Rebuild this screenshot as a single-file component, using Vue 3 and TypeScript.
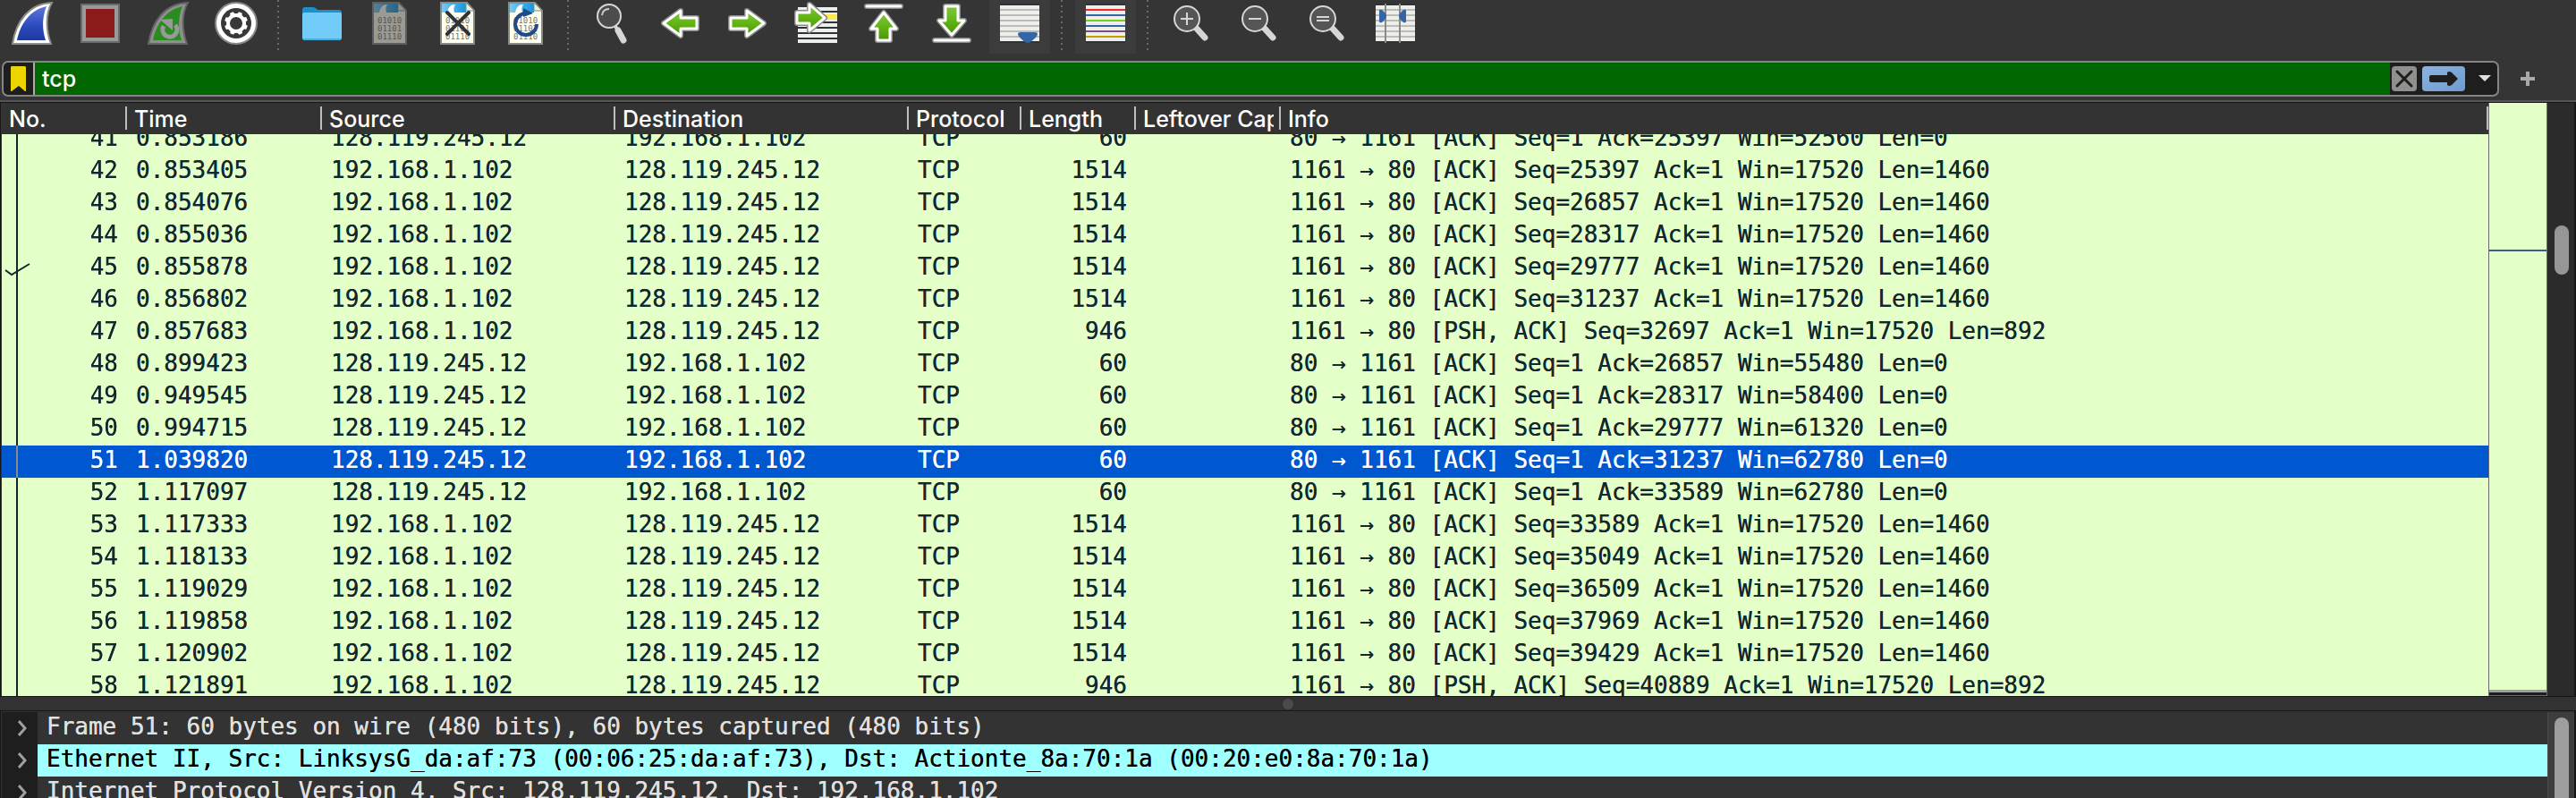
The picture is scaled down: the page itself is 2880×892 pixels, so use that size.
<script setup lang="ts">
import { onMounted, ref } from 'vue'

interface Packet {
  no: number
  time: string
  out: boolean
  length: number
  info: string
}

const local = '192.168.1.102'
const server = '128.119.245.12'

function sent(no: number, time: string, seq: number, push = false): Packet {
  const len = push ? 892 : 1460
  return {
    no,
    time,
    out: true,
    length: push ? 946 : 1514,
    info: `1161 → 80 [${push ? 'PSH, ' : ''}ACK] Seq=${seq} Ack=1 Win=17520 Len=${len}`,
  }
}

function acked(no: number, time: string, ack: number, win: number): Packet {
  return { no, time, out: false, length: 60, info: `80 → 1161 [ACK] Seq=1 Ack=${ack} Win=${win} Len=0` }
}

const packets: Packet[] = [
  acked(41, '0.853186', 25397, 52560),
  sent(42, '0.853405', 25397),
  sent(43, '0.854076', 26857),
  sent(44, '0.855036', 28317),
  sent(45, '0.855878', 29777),
  sent(46, '0.856802', 31237),
  sent(47, '0.857683', 32697, true),
  acked(48, '0.899423', 26857, 55480),
  acked(49, '0.949545', 28317, 58400),
  acked(50, '0.994715', 29777, 61320),
  acked(51, '1.039820', 31237, 62780),
  acked(52, '1.117097', 33589, 62780),
  sent(53, '1.117333', 33589),
  sent(54, '1.118133', 35049),
  sent(55, '1.119029', 36509),
  sent(56, '1.119858', 37969),
  sent(57, '1.120902', 39429),
  sent(58, '1.121891', 40889, true),
]

const selected = ref(51)
const ackedPacket = 45
const filter = ref('tcp')
const details = [
  'Frame 51: 60 bytes on wire (480 bits), 60 bytes captured (480 bits)',
  'Ethernet II, Src: LinksysG_da:af:73 (00:06:25:da:af:73), Dst: Actionte_8a:70:1a (00:20:e0:8a:70:1a)',
  'Internet Protocol Version 4, Src: 128.119.245.12, Dst: 192.168.1.102',
]
const activeDetail = ref(1)
const stripes = [8, 14, 20, 26, 32, 38]
const ruleColors = ['#ef2929', '#3465a4', '#73d216', '#3465a4', '#75507b', '#c4a000']
const teeth = [0, 45, 90, 135, 180, 225, 270, 315]

const list = ref<HTMLElement | null>(null)
onMounted(() => {
  if (list.value) list.value.scrollTop = 12
})
</script>

<template>
  <div class="window">
    <svg class="defs" width="0" height="0" aria-hidden="true">
      <defs>
        <linearGradient id="blue" x1="0" y1="0" x2="0" y2="1"><stop offset="0" stop-color="#5b7ad9" /><stop offset=".6" stop-color="#2b49bb" /><stop offset="1" stop-color="#1f3a9e" /></linearGradient>
        <linearGradient id="green" x1="0" y1="0" x2="0" y2="1"><stop offset="0" stop-color="#7fc93a" /><stop offset=".5" stop-color="#62b515" /><stop offset="1" stop-color="#4a9408" /></linearGradient>
        <linearGradient id="sky" x1="0" y1="0" x2="1" y2="0"><stop offset="0" stop-color="#7cc8ef" /><stop offset="1" stop-color="#1296dc" /></linearGradient>
        <g id="doc">
          <path d="M5 3h29l8 9v37H5z" fill="#fffff0" stroke="#888a85" stroke-width="2" />
          <path d="M6 4h27v10H6z" fill="url(#sky)" />
          <path d="M12 14c1-6 4-9 9-9-2 3-2 6-1 9z" fill="#fff" />
          <path d="M33 3v9h9z" fill="#e8eee0" stroke="#888a85" />
          <g class="bits"><text x="10" y="26">01010</text><text x="10" y="35">01101</text><text x="10" y="44">01110</text></g>
        </g>
        <g id="lens">
          <path d="M30 32l9 10" stroke="#d6d6d6" stroke-width="7" stroke-linecap="round" />
          <circle cx="19" cy="21" r="14" fill="#555" stroke="#d6d6d6" stroke-width="2" />
        </g>
        <path id="arrow" d="M5 20h18V12l19 14-19 14v-8H5z" />
      </defs>
    </svg>

    <div class="toolbar" role="toolbar" aria-label="Main toolbar">
      <button aria-label="Start capture"><svg viewBox="0 0 48 52"><path d="M2 49C6 24 20 4 46 3c-7 12-7 30-1 46z" fill="#fff" stroke="#8c8c88" stroke-width="2" /><path d="M7 45C11 26 22 11 40 7c-5 12-5 26-1 38z" fill="url(#blue)" /></svg></button>
      <button aria-label="Stop capture"><svg viewBox="0 0 48 52"><path d="M3 5h42v42H3z" fill="#999" stroke="#6b6b6b" stroke-width="2" /><path d="M8 10h32v32H8z" fill="#8b1a1a" /></svg></button>
      <button aria-label="Restart capture"><svg viewBox="0 0 48 52"><path d="M2 49C6 24 20 4 46 3c-7 12-7 30-1 46z" fill="#8f8f8f" stroke="#646464" stroke-width="2" /><path d="M7 45C11 26 22 11 40 7c-5 12-5 26-1 38z" fill="#2a8c1e" /><path d="M19 29a8 8 0 1 0 13-1" fill="none" stroke="#999" stroke-width="5" /><path d="M15 22l14-1v13z" fill="#999" /></svg></button>
      <button aria-label="Capture options"><svg viewBox="0 0 48 52"><circle cx="24" cy="26" r="23" fill="#fff" stroke="#888" stroke-width="2" /><circle cx="24" cy="26" r="17" fill="#383838" /><circle cx="24" cy="26" r="9" fill="none" stroke="#fff" stroke-width="4" /><path v-for="a in teeth" :key="a" d="M22 13h4l1 4h-6z" fill="#fff" :transform="`rotate(${a + 22} 24 26)`" /></svg></button>
      <i class="divider" />
      <button aria-label="Open file"><svg viewBox="0 0 48 52"><path d="M2 11q0-3 3-3h9q2 0 4 2l2 1h23q3 0 3 3v26H2z" fill="#1e8fc8" /><path d="M2 16q0-2 2-2h40q2 0 2 2v26q0 3-3 3H5q-3 0-3-3z" fill="#73cbfa" /><path d="M3 43q1 2 3 2h36q2 0 3-2z" fill="#48aede" /></svg></button>
      <button aria-label="Save file"><svg viewBox="0 0 48 52"><g opacity=".5"><use href="#doc" /></g></svg></button>
      <button aria-label="Close file"><svg viewBox="0 0 48 52"><use href="#doc" /><path d="M12 14l24 24M36 14L12 38" stroke="#2e3436" stroke-width="4" stroke-linecap="round" /></svg></button>
      <button aria-label="Reload file"><svg viewBox="0 0 48 52"><use href="#doc" /><path d="M24 15a12 12 0 1 0 12 12" fill="none" stroke="#204a87" stroke-width="4" /><path d="M21 9l11 6-11 4z" fill="#204a87" /></svg></button>
      <i class="divider" />
      <button aria-label="Find packet"><svg viewBox="0 0 48 52"><path d="M31 34l6 11" stroke="#d6d6d6" stroke-width="7" stroke-linecap="round" /><path d="M27 28l4 6" stroke="#d6d6d6" stroke-width="4" /><circle cx="21" cy="18" r="13" fill="#4c4c4c" stroke="#d6d6d6" stroke-width="2" /><path d="M13 17q1-7 8-7" fill="none" stroke="#ccc" stroke-width="2" /></svg></button>
      <button aria-label="Previous packet"><svg viewBox="0 0 48 52"><g transform="matrix(-1 0 0 1 48 0)"><use href="#arrow" class="rim" /><use href="#arrow" class="fill" /></g></svg></button>
      <button aria-label="Next packet"><svg viewBox="0 0 48 52"><use href="#arrow" class="rim" /><use href="#arrow" class="fill" /></svg></button>
      <button aria-label="Go to packet"><svg viewBox="0 0 48 52"><path d="M4 6h44v42H4z" fill="#2e3436" /><path v-for="y in [10, 16, 22, 28, 34, 40, 46]" :key="y" :d="`M4 ${y}h44`" stroke="#eeeeec" stroke-width="4" /><path d="M34 16h14v6H34z" fill="#fce94f" /><path d="M3 14h14V5l17 15-17 14v-8H3z" class="rim" /><path d="M3 14h14V5l17 15-17 14v-8H3z" class="fill" /></svg></button>
      <button aria-label="First packet"><svg viewBox="0 0 48 52"><path d="M5 7h38" class="bar-rim" /><path d="M5 7h38" class="bar" /><path d="M24 14l14 18h-7v13H17V32h-7z" class="rim" /><path d="M24 14l14 18h-7v13H17V32h-7z" class="fill" /></svg></button>
      <button aria-label="Last packet"><svg viewBox="0 0 48 52"><path d="M5 45h38" class="bar-rim" /><path d="M5 45h38" class="bar" /><path d="M24 39L10 23h7V7h14v16h7z" class="rim" /><path d="M24 39L10 23h7V7h14v16h7z" class="fill" /></svg></button>
      <button class="on" aria-pressed="true" aria-label="Auto scroll"><svg viewBox="0 0 48 52"><path d="M2 4h44v44H2z" fill="#2e3436" /><path d="M2 6h44v40H2z" fill="#eeeeec" /><path v-for="y in stripes" :key="y" :d="`M2 ${y + 3}h44`" stroke="#babdb6" stroke-width="2" /><path d="M22 38q0-2 3-2h16q3 0 3 2 0 3-8 9-3 2-6 0-8-6-8-9z" fill="#3465a4" /></svg></button>
      <i class="divider" />
      <button class="on" aria-pressed="true" aria-label="Colorize packets"><svg viewBox="0 0 48 52"><path d="M2 4h44v44H2z" fill="#2e3436" /><path d="M2 6h44v40H2z" fill="#eeeeec" /><path v-for="(c, i) in ruleColors" :key="i" :d="`M2 ${11 + i * 6}h44`" :stroke="c" stroke-width="2" /></svg></button>
      <i class="divider" />
      <button aria-label="Zoom in"><svg viewBox="0 0 48 52"><use href="#lens" /><path d="M12 21h14M19 14v14" class="sign" /></svg></button>
      <button aria-label="Zoom out"><svg viewBox="0 0 48 52"><use href="#lens" /><path d="M12 21h14" class="sign" /></svg></button>
      <button aria-label="Normal size"><svg viewBox="0 0 48 52"><use href="#lens" /><path d="M12 19h14M12 23h14" class="sign" /></svg></button>
      <button aria-label="Resize columns"><svg viewBox="0 0 48 52"><path d="M2 4h44v44H2z" fill="#2e3436" /><path d="M2 6h44v40H2z" fill="#eeeeec" /><path v-for="y in stripes" :key="y" :d="`M2 ${y + 3}h44`" stroke="#babdb6" stroke-width="2" /><path d="M13 4v44M29 4v44" stroke="#888a85" stroke-width="2" /><path d="M6 12q0-2 3-1 5 4 5 7t-5 7q-3 1-3-1zM36 12q0-2-3-1-5 4-5 7t5 7q3 1 3-1z" fill="#3465a4" /></svg></button>
    </div>

    <div class="filter-row">
      <div class="filter">
        <button class="bookmark" aria-label="Bookmarks"><svg width="17" height="28" viewBox="0 0 17 28"><path d="M1 0h15l1 1v27h-1l-7-6-8 6H0V1z" fill="#edd400" /></svg></button>
        <input v-model="filter" aria-label="Display filter" spellcheck="false">
        <div class="actions">
          <button class="clear" aria-label="Clear filter"><svg width="28" height="28" viewBox="0 0 28 28"><path d="M6 6l16 16M22 6L6 22" stroke="#1e1e1e" stroke-width="3" stroke-linecap="round" /></svg></button>
          <button class="apply" aria-label="Apply filter"><svg width="48" height="28" viewBox="0 0 48 28"><path d="M10 10h18V7q2-2 5 0l7 7-7 7q-3 2-5 0v-3H10q-2 0-2-2v-4q0-2 2-2z" fill="#1e1e1e" /></svg></button>
          <button class="recent" aria-label="Recent filters"><svg width="14" height="8" viewBox="0 0 14 8"><path d="M0 0h14L7 7z" fill="#e0ded8" /></svg></button>
        </div>
      </div>
      <button class="add" aria-label="Add filter button"><svg width="16" height="16" viewBox="0 0 16 16"><path d="M8 0v16M0 8h16" stroke="#aaa" stroke-width="4" /></svg></button>
    </div>

    <main class="pane packets">
      <div ref="list" class="list">
        <table>
          <colgroup><col class="c-no"><col class="c-time"><col class="c-addr"><col class="c-addr"><col class="c-proto"><col class="c-len"><col class="c-left"><col></colgroup>
          <thead>
            <tr><th>No.</th><th>Time</th><th>Source</th><th>Destination</th><th>Protocol</th><th>Length</th><th><div class="clip">Leftover Capture Data</div></th><th>Info</th></tr>
          </thead>
          <tbody>
            <tr v-for="p in packets" :key="p.no" :class="{ selected: p.no === selected }" @click="selected = p.no">
              <td class="num no"><svg v-if="p.no === ackedPacket" class="tick" width="30" height="16" viewBox="0 0 30 16"><path d="M1 9l7 5L28 2" fill="none" stroke="#12272e" stroke-width="2" /></svg>{{ p.no }}</td>
              <td>{{ p.time }}</td>
              <td>{{ p.out ? local : server }}</td>
              <td>{{ p.out ? server : local }}</td>
              <td>TCP</td>
              <td class="num">{{ p.length }}</td>
              <td />
              <td>{{ p.info }}</td>
            </tr>
          </tbody>
        </table>
      </div>
      <div class="minimap"><i class="mark" /></div>
      <div class="track"><i class="thumb" /></div>
    </main>

    <div class="splitter"><i /></div>

    <section class="pane tree">
      <ul>
        <li v-for="(d, i) in details" :key="i" :class="{ active: i === activeDetail }" @click="activeDetail = i">
          <button aria-label="Expand"><svg width="12" height="20" viewBox="0 0 12 20"><path d="M2 2l7 8-7 8" fill="none" stroke="#a0a0a0" stroke-width="3" /></svg></button>
          <span>{{ d }}</span>
        </li>
      </ul>
      <div class="track"><i class="thumb" /></div>
    </section>
  </div>
</template>

<style>
html, body { margin: 0; background: #333; }
</style>

<style scoped>
.window {
  display: flex;
  flex-direction: column;
  height: 100vh;
  overflow: hidden;
  background: #353535;
  color: #fff;
  font: 25px/32px Inter, "Liberation Sans", sans-serif;
}
.defs { position: absolute; }
button { border: 0; padding: 0; background: none; color: inherit; font: inherit; }

.toolbar { display: flex; gap: 8px; height: 60px; padding: 0 2px; flex: none; }
.toolbar button { width: 68px; flex: none; display: flex; justify-content: center; }
.toolbar svg { width: 48px; height: 52px; }
.toolbar .on { background: #3c3c3c; }
.divider { width: 12px; height: 56px; flex: none; background: repeating-linear-gradient(#6a6a6a 0 2px, transparent 2px 6px) 4px 0 / 2px 100% no-repeat; }
.bits text { font: 9px "DejaVu Sans Mono", monospace; fill: #777974; }
.rim { fill: #888a85; stroke: #888a85; stroke-width: 6px; stroke-linejoin: round; }
.fill { fill: url(#green); stroke: #fff; stroke-width: 3px; stroke-linejoin: round; }
.bar-rim { stroke: #888a85; stroke-width: 6px; stroke-linecap: round; }
.bar { stroke: #fff; stroke-width: 3px; stroke-linecap: round; }
.sign { fill: none; stroke: #d6d6d6; stroke-width: 2px; }

.filter-row { display: flex; align-items: center; height: 48px; padding: 8px 0 0 2px; box-sizing: border-box; flex: none; }
.filter {
  flex: 1;
  display: flex;
  height: 36px;
  border: 2px solid #858585;
  border-radius: 7px;
  background: #1e1e1e;
  overflow: hidden;
}
.bookmark { width: 35px; box-sizing: border-box; border-right: 2px solid #a9b0a6; display: grid; place-items: center; }
.filter input {
  flex: 1;
  min-width: 0;
  border: 0;
  outline: 0;
  padding: 0 8px;
  background: #006600;
  color: #fff;
  font: inherit;
  font-weight: 500;
}
.actions { display: flex; align-items: center; gap: 6px; width: 120px; padding-left: 2px; box-sizing: border-box; }
.actions button { height: 28px; display: flex; align-items: center; }
.clear { border-radius: 4px; background: #8f918c; }
.apply { border-radius: 4px; background: linear-gradient(150deg, #8fb2de, #6d9ccf); }
.recent { padding-left: 9px; }
.add { width: 86px; flex: none; display: flex; justify-content: center; padding-right: 22px; box-sizing: border-box; }

.pane { display: flex; box-sizing: border-box; border: solid #161616; border-width: 1px 2px 1px 1px; }
.packets { flex: 1; min-height: 0; box-shadow: 0 -2px #555; margin-top: 6px; padding-left: 1px; }
.list { flex: 1; min-width: 0; overflow: auto; scrollbar-width: none; background: #e4ffc7; color: #12272e; }
table { width: 100%; table-layout: fixed; border-collapse: separate; border-spacing: 0; }
.c-no { width: 140px; }
.c-time { width: 218px; }
.c-addr { width: 328px; }
.c-proto { width: 126px; }
.c-len { width: 128px; }
.c-left { width: 162px; }
th {
  position: sticky;
  top: 0;
  z-index: 1;
  height: 35px;
  padding: 0 4px 0 8px;
  box-sizing: border-box;
  background: linear-gradient(#bdbdbd, #bdbdbd) right 4px / 2px 26px no-repeat #333;
  color: #fff;
  font-weight: 500;
  text-align: left;
  white-space: nowrap;
}
.clip { overflow: hidden; margin-right: 4px; }
td {
  height: 36px;
  padding: 0 10px;
  box-sizing: border-box;
  vertical-align: top;
  font: 26px/32px "DejaVu Sans Mono", monospace;
  text-shadow: 0 0 currentColor;
  white-space: pre;
}
.num { text-align: right; }
.no { position: relative; background: linear-gradient(#12272e, #12272e) 16px 0 / 2px 100% no-repeat; }
.tick { position: absolute; left: 3px; top: 11px; }
.selected td { background-color: #0058d0; color: #fff; }
.selected .no { background-image: linear-gradient(#8a8a8a, #8a8a8a); }

.minimap {
  width: 64px;
  flex: none;
  border: solid #6b6b6b;
  border-width: 0 1px 1px;
  background: linear-gradient(#1e1e1e, #1e1e1e) bottom / 100% 3px no-repeat, linear-gradient(#a0a39c, #a0a39c) bottom / 100% 6px no-repeat, #e4ffc7;
}
.mark { display: block; height: 2px; margin-top: 164px; background: #3d5f96; }
.track { width: 30px; flex: none; box-sizing: border-box; padding: 0 8px; background: #2b2b2b; }
.thumb { display: block; width: 16px; height: 55px; margin-top: 137px; border-radius: 8px; background: #969696; }

.splitter { height: 15px; flex: none; background: #323232; display: flex; justify-content: center; align-items: center; }
.splitter i { width: 12px; height: 12px; border-radius: 50%; background: #4b4b4b; }

.tree { height: 98px; flex: none; border-bottom: 0; padding: 1px 0 0 1px; overflow: hidden; background: #333; }
ul {
  flex: 1;
  min-width: 0;
  margin: 0;
  padding: 0;
  list-style: none;
  overflow: hidden;
  color: #e0e0e0;
  font: 26px/32px "DejaVu Sans Mono", monospace;
  text-shadow: 0 0 currentColor;
}
li { display: flex; height: 36px; white-space: pre; }
li button { width: 40px; flex: none; padding-left: 5px; box-sizing: border-box; display: grid; place-items: center; background: #1e1e1e; }
li span { flex: 1; padding-left: 10px; }
.active span { background: #a0ffff; color: #000; text-shadow: 0 0 #000; }
.tree .track { background: #3d3d3d; border-left: 1px solid #4a4a4a; padding-left: 7px; }
.tree .thumb { height: 200px; margin-top: 6px; background: #9e9e9e; }
</style>
